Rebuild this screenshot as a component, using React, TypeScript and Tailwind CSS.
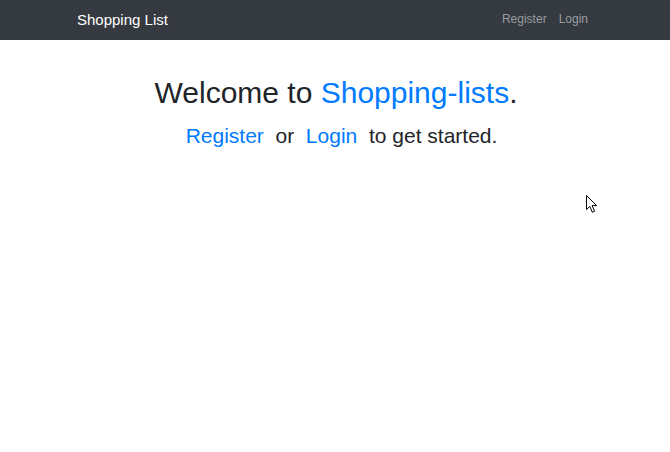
import React from "react";

export default function App() {
  return (
    <div className="min-h-[452px] bg-white relative" style={{ fontFamily: '"Liberation Sans", Arial, sans-serif' }}>
      <nav className="h-[40px] bg-[#343a40] flex items-center justify-between pl-[77px] pr-[82px] pb-[2px]">
        <span className="text-[15px] text-white leading-none">Shopping List</span>
        <div className="flex items-center gap-[12px] text-[12px] text-[#9a9da0] leading-none">
          <span>Register</span>
          <span>Login</span>
        </div>
      </nav>
      <div className="flex flex-col items-center">
        <h1 className="mt-[35px] pl-[2px] text-[30px] leading-[36px] text-[#212529]">
          Welcome to <span className="text-[#007bff]">Shopping-lists</span>.
        </h1>
        <p className="mt-[9px] pl-[13px] text-[21px] leading-[31px] text-[#212529] whitespace-pre">
          <span className="text-[#007bff]">Register</span>{"\u00a0 or \u00a0"}
          <span className="text-[#007bff]">Login</span>{"\u00a0 to get started."}
        </p>
      </div>
      <svg className="absolute left-[586px] top-[195px]" width="13" height="19" viewBox="0 0 13 19">
        <path d="M0.5 0.5 L0.5 14.5 L3.8 11.4 L6.3 17.2 L8.6 16.2 L6.1 10.6 L10.6 10.6 Z" fill="#fff" stroke="#000" strokeWidth="1" strokeLinejoin="miter" />
      </svg>
    </div>
  );
}
